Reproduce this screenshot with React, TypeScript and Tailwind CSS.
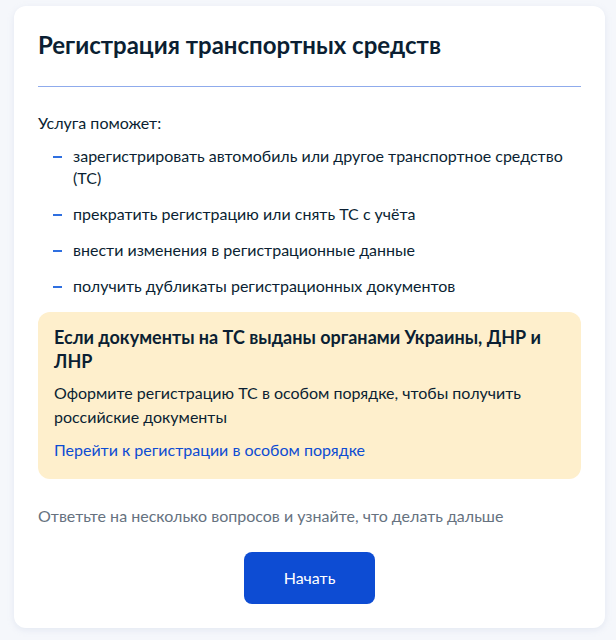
import React from "react";

const items = [
  "зарегистрировать автомобиль или другое транспортное средство (ТС)",
  "прекратить регистрацию или снять ТС с учёта",
  "внести изменения в регистрационные данные",
  "получить дубликаты регистрационных документов",
];

export default function App() {
  return (
    <div
      className="min-h-screen bg-[#f5f7fb] pt-[6px] pl-[14px]"
      style={{ fontFamily: "Lato, 'Noto Sans', sans-serif" }}
    >
      <div className="w-[591px] rounded-[12px] bg-white px-[24px] pt-[24px] pb-[24px] shadow-[0_2px_6px_rgba(180,190,220,0.25)] text-[#0b1f33]">
        <h1 className="text-[24px] leading-[30px] font-bold">Регистрация транспортных средств</h1>
        <div className="mt-[26px] h-px bg-[#8fabec]" />
        <p className="mt-[24px] text-[16px] leading-[24px]">Услуга поможет:</p>
        <ul className="mt-[10px] flex flex-col gap-[14px] text-[16px] leading-[22px]">
          {items.map((t) => (
            <li key={t} className="flex">
              <span className="ml-[15px] mr-[11px] mt-[11px] h-[2px] w-[9px] shrink-0 bg-[#2f6fe0]" />
              <span>{t}</span>
            </li>
          ))}
        </ul>
        <div className="mt-[15px] rounded-[12px] bg-[#feefcc] px-[16px] pt-[13px] pb-[17px]">
          <p className="text-[18px] leading-[24px] font-bold">
            Если документы на ТС выданы органами Украины, ДНР и ЛНР
          </p>
          <p className="mt-[8px] text-[16px] leading-[24px]">
            Оформите регистрацию ТС в особом порядке, чтобы получить российские документы
          </p>
          <a className="mt-[9px] block text-[16px] leading-[24px] text-[#0d4cd3]" href="#">
            Перейти к регистрации в особом порядке
          </a>
        </div>
        <p className="mt-[25px] text-[16px] leading-[24px] text-[#66727f]">
          Ответьте на несколько вопросов и узнайте, что делать дальше
        </p>
        <div className="mt-[24px] flex justify-center">
          <button className="h-[52px] w-[131px] rounded-[8px] bg-[#0d4cd3] text-[16px] text-white">
            Начать
          </button>
        </div>
      </div>
    </div>
  );
}
